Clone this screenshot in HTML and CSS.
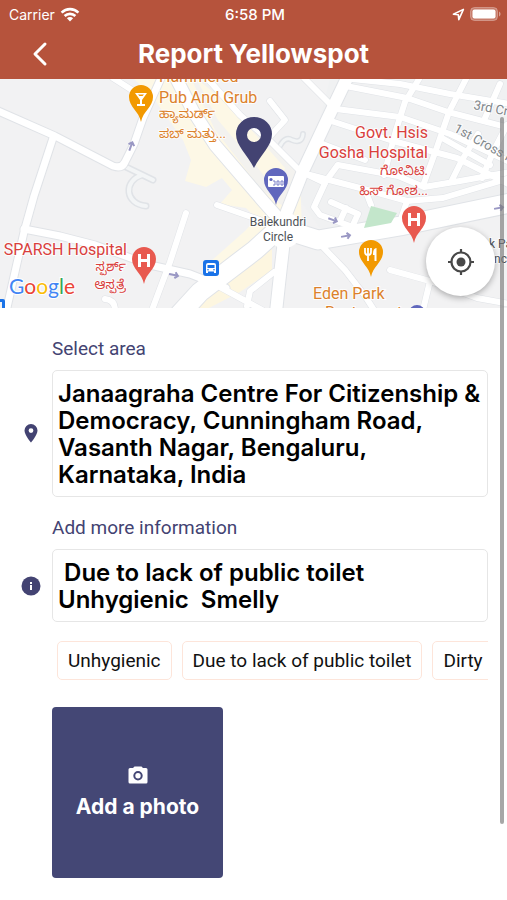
FILE: index.html
```html
<!DOCTYPE html>
<html lang="en">
<head>
    <meta charset="UTF-8">
    <meta name="viewport" content="width=device-width, initial-scale=1.0">
    <title>Report Yellowspot</title>
    <link rel="stylesheet" href="styles.css">
</head>
<body>
    <header class="header">
        <div class="status-bar">
            <div class="status-left">
                <span>Carrier</span>
                <svg width="20" height="15" viewBox="0 0 20 15" fill="none" stroke="#fff" stroke-width="2.6">
                    <path d="M1.6 5.6a12 12 0 0 1 16.8 0"/>
                    <path d="M4.6 9a7.8 7.8 0 0 1 10.8 0"/>
                    <path d="M10 14.4L6.9 11.3a4.4 4.4 0 0 1 6.2 0z" fill="#fff" stroke="none"/>
                </svg>
            </div>
            <span class="status-time">6:58 PM</span>
            <div class="status-right">
                <svg width="13" height="13" viewBox="0 0 13 13" fill="none" stroke="#fff" stroke-width="1.6" stroke-linejoin="round">
                    <path d="M11.4 1.4L1.4 6.2l4.9.5.5 4.9z"/>
                </svg>
                <svg width="31" height="14" viewBox="0 0 31 14">
                    <rect x="0.5" y="0.5" width="27" height="13" rx="4" fill="#fff" fill-opacity="0.25" stroke="#fff" stroke-opacity="0.3"/>
                    <rect x="2.5" y="2.5" width="23" height="9" rx="2" fill="#fff"/>
                    <path d="M29 4.5c2 .8 2 4.2 0 5z" fill="#fff" fill-opacity="0.45"/>
                </svg>
            </div>
        </div>
        <div class="nav-bar">
            <button class="back-btn" type="button" aria-label="Back">
                <svg width="16" height="26" viewBox="0 0 16 26" fill="none" stroke="#fff" stroke-width="3" stroke-linecap="round" stroke-linejoin="round">
                    <path d="M13 3L3 13l10 10"/>
                </svg>
            </button>
            <h1>Report Yellowspot</h1>
        </div>
    </header>

    <main>
        <section class="map">
            <svg class="map-canvas" viewBox="0 79 507 229" preserveAspectRatio="xMidYMid slice">
                <defs>
                    <g id="minor">
                        <path d="M207 78L240 115L270 141L300 171L325 183"/>
                        <path d="M270 101L285 120L273 133L268 139"/>
                        <path d="M217 205L260 220"/>
                        <path d="M186 213L170 262L152 310"/>
                        <path d="M113 78L135 92"/>
                        <path d="M105 299Q115 300 115 310"/>
                        <path d="M322 246L345 270L365 296L374 310"/>
                        <path d="M390 270L430 281L423 310M430 281L477 298L510 304"/>
                        <path d="M220 287L262 310M274 272L250 291L247 306"/>
                        <path d="M304 78L332 106"/>
                        <path d="M352 79L400 84L450 94L510 104"/>
                        <path d="M346 86L407 98L448 112L510 128"/>
                        <path d="M336 109L400 117L450 134L510 162"/>
                        <path d="M328 120L393 141L457 158L510 185"/>
                        <path d="M310 175L360 188L407 201L443 198L510 178"/>
                        <path d="M320 143L365 160M338 165L398 176L424 187L460 181L510 172"/>
                        <path d="M419 79L405 102L396 130L384 175"/>
                        <path d="M466 79L449 112L436 150L424 183"/>
                        <path d="M500 84L485 118M478 134L462 160L452 180"/>
                        <path d="M507 125L493 152L482 178"/>
                        <path d="M442 138L490 165"/>
                        <path d="M337 166L326 181L314 207L320 215L353 227"/>
                        <path d="M331 202L358 214L352 227M346 208L340 221"/>
                        <path d="M366 192L371 205M407 201L402 216"/>
                    </g>
                    <g id="medium">
                        <path d="M-4 110L55 136L113 166Q122 169 125 162L134 144L143 118L162 76"/>
                        <path d="M53 138L34 196L24 232L6 312"/>
                        <path d="M24 229L60 236L95 245L150 265L190 274L226 288"/>
                    </g>
                    <g id="major">
                        <path d="M176 78L193 111L215 145L263 201L286 227"/>
                        <path d="M350 72L326 122L303 171L286 214L284 240L280 275L276 312"/>
                    </g>
                    <g id="arterial">
                        <path d="M286 222L255 250L200 292L178 316"/>
                        <path d="M280 228L318 240L400 226L515 202"/>
                    </g>
                    <path id="pin" d="M0 23C-2 12-12 8-12-2a12 12 0 0 1 24 0C12 8 2 12 0 23z"/>
                    <g id="arrow" fill="none" stroke="#9a98c4" stroke-width="2">
                        <path d="M-5 0H4M1-3l3 3l-3 3"/>
                    </g>
                </defs>

                <rect y="79" width="507" height="229" fill="#f2f2f3"/>
                <path d="M330 79H507V200L400 222L325 235L300 200z" fill="#f0f1f2"/>
                <path d="M133 78H213L242 117L300 173L302 232L278 245L262 240L212 286L210 262L246 230L256 218L246 208L220 204L232 190L222 178L206 187L185 181L191 160L183 140L152 96z" fill="#fdf8e6"/>
                <path d="M272 240V270L240 292L205 310H190L222 284z" fill="#fdf6e0"/>
                <path d="M191 78L207 78L240 115L270 141L298 172L288 210L262 190L215 130z" fill="#f3f2ef"/>
                <path d="M196 78L230 106L285 168L277 192L250 158L218 120z" fill="#fdf8e6"/>

                <g fill="none" stroke-linecap="round" stroke-linejoin="round" stroke="#e0e3e7">
                    <path d="M124 166L153 180M142 175C123 181 125 204 146 206" stroke-width="7"/>
                    <path d="M280 146Q285 136 292 140Q302 144 303 134" stroke-width="6"/>
                    <path d="M124 166L153 180M142 175C123 181 125 204 146 206" stroke="#f3f5f6" stroke-width="4"/>
                    <path d="M280 146Q285 136 292 140Q302 144 303 134" stroke="#f3f5f6" stroke-width="3"/>
                    <use href="#minor" stroke-width="7"/>
                    <use href="#medium" stroke-width="9"/>
                    <use href="#major" stroke-width="14"/>
                    <use href="#arterial" stroke-width="21"/>
                </g>
                <g fill="none" stroke-linecap="round" stroke-linejoin="round" stroke="#fff">
                    <use href="#minor" stroke-width="6"/>
                    <use href="#medium" stroke-width="7"/>
                    <use href="#major" stroke-width="12"/>
                    <use href="#arterial" stroke-width="19"/>
                </g>
                <circle cx="284" cy="230" r="18" fill="#fff"/>
                <path d="M371 206L397 213L391 223L364 228z" fill="#c3e6cb"/>

                <use href="#arrow" transform="translate(131 146) rotate(-70)"/>
                <use href="#arrow" transform="translate(174 275) rotate(12)"/>
                <use href="#arrow" transform="translate(333 220) rotate(20)"/>
                <use href="#arrow" transform="translate(346 236) rotate(-10)"/>
                <use href="#arrow" transform="translate(499 208) rotate(-10)"/>

                <!-- place labels -->
                <g class="label orange">
                    <text x="159" y="82">Hammered</text>
                    <text x="159" y="103">Pub And Grub</text>
                    <text class="kannada" x="159" y="118">ಹ್ಯಾಮರ್ಡ್</text>
                    <text class="kannada" x="159" y="138">ಪಬ್ ಮತ್ತು...</text>
                    <text x="313" y="299">Eden Park</text>
                    <text x="325" y="318">Restaurant</text>
                </g>
                <g class="label red" text-anchor="end">
                    <text x="428" y="138">Govt. Hsis</text>
                    <text x="428" y="158">Gosha Hospital</text>
                    <text class="kannada" x="428" y="175">ಗೋವಿಟಿ.</text>
                    <text class="kannada" x="428" y="195">ಹಿಸ್ ಗೋಶ...</text>
                    <text x="127" y="255">SPARSH Hospital</text>
                    <text class="kannada" x="126" y="271">ಸ್ಪರ್ಶ್</text>
                    <text class="kannada" x="126" y="289">ಆಸ್ಪತ್ರೆ</text>
                </g>
                <g class="label small">
                    <text x="278" y="226" text-anchor="middle">Balekundri</text>
                    <text x="278" y="241" text-anchor="middle">Circle</text>
                    <text x="489" y="248">k Park</text>
                    <text x="494" y="263">nction</text>
                </g>
                <g class="label street">
                    <text transform="translate(473 109) rotate(11)">3rd Cross</text>
                    <text transform="translate(453 131) rotate(29)">1st Cross Road</text>
                </g>

                <!-- place pins -->
                <g transform="translate(141 99)">
                    <use href="#pin" fill="#f29900"/>
                    <path d="M-6-6H6L1 1V5H4V7H-4V5H-1V1zM-3-4.5L-1.5-3h3L3-4.5z" fill="#fff" fill-rule="evenodd"/>
                </g>
                <g transform="translate(144 261)">
                    <use href="#pin" fill="#e8594f"/>
                    <path d="M-4.5-7V6M4.5-7V6M-4.5-.5H4.5" stroke="#fff" stroke-width="3" fill="none"/>
                </g>
                <g transform="translate(414 220)">
                    <use href="#pin" fill="#e8594f"/>
                    <path d="M-4.5-7V6M4.5-7V6M-4.5-.5H4.5" stroke="#fff" stroke-width="3" fill="none"/>
                </g>
                <g transform="translate(371 254)">
                    <use href="#pin" fill="#f29900"/>
                    <path d="M-6-6V-2Q-6 1-3 1T0-2V-6M-3-6V7" stroke="#fff" stroke-width="1.8" fill="none"/>
                    <path d="M2 0Q2-6 5.500-6V7H3.500V1H2z" fill="#fff"/>
                </g>
                <g transform="translate(276 182)">
                    <use href="#pin" fill="#6067bd"/>
                    <rect x="-8" y="-6" width="16" height="11" rx="1" fill="#fff"/>
                    <circle cx="-5" cy="-2.5" r="1.6" fill="#6067bd"/>
                    <path d="M-3-1h2v4h-2M1-1h2v4h-2zM5-1h2v4h-2z" stroke="#7b80c8" fill="none"/>
                </g>
                <g transform="translate(211 268)">
                    <rect x="-8" y="-8" width="16" height="16" rx="3" fill="#1a73e8"/>
                    <path d="M-5 5V-3Q-5-5-3-5H3Q5-5 5-3V5H3V3.500H-3V5z" fill="#fff"/>
                    <path d="M-3.500-3H3.500V0H-3.500z" fill="#1a73e8"/>
                    <circle cx="-3" cy="1.700" r="0.800" fill="#1a73e8"/>
                    <circle cx="3" cy="1.700" r="0.800" fill="#1a73e8"/>
                </g>
                <path d="M-2 299H3Q5 299 5 301V309H2V302H-2z" fill="#1a73e8"/>
                <circle cx="417" cy="313" r="8" fill="#6067bd"/>
                <path d="M254 168C247 154 236 146 236 134a18 17 0 0 1 36 0C272 146 261 154 254 168zM254 128a7 7 0 1 0 0 14a7 7 0 0 0 0-14z" fill="#434372" fill-rule="evenodd"/>

                <text class="google" x="9" y="294"><tspan fill="#4285f4">G</tspan><tspan fill="#ea4335">o</tspan><tspan fill="#fbbc05">o</tspan><tspan fill="#4285f4">g</tspan><tspan fill="#34a853">l</tspan><tspan fill="#ea4335">e</tspan></text>
            </svg>
            <button class="locate-btn" type="button" aria-label="My location">
                <svg width="28" height="28" viewBox="0 0 28 28" fill="none" stroke="#484848" stroke-width="2.200">
                    <circle cx="14" cy="14" r="9.500"/>
                    <circle cx="14" cy="14" r="4.500" fill="#484848" stroke="none"/>
                    <path d="M14 1v4M14 23v4M1 14h4M23 14h4"/>
                </svg>
            </button>
        </section>

        <form class="report-form">
            <div class="field">
                <label for="area">Select area</label>
                <svg class="field-icon" width="14" height="20" viewBox="0 0 14 20">
                    <path d="M7 0a6.500 6.500 0 0 0-6.500 6.500C.5 11 7 18.500 7 18.500S13.500 11 13.500 6.500A6.500 6.500 0 0 0 7 0zM7 4.200a2.400 2.400 0 1 1 0 4.800a2.400 2.400 0 0 1 0-4.800z" fill="#434372" fill-rule="evenodd"/>
                </svg>
                <textarea id="area" rows="4">Janaagraha Centre For Citizenship &amp; Democracy, Cunningham Road, Vasanth Nagar, Bengaluru, Karnataka, India</textarea>
            </div>
            <div class="field">
                <label for="info">Add more information</label>
                <svg class="field-icon" width="20" height="20" viewBox="0 0 20 20">
                    <circle cx="10" cy="10" r="9.500" fill="#434372"/>
                    <path d="M9 9h2v5H9zM9 6h2v2H9z" fill="#fff"/>
                </svg>
                <textarea id="info" rows="2"> Due to lack of public toilet
Unhygienic  Smelly</textarea>
            </div>
            <div class="chips">
                <button class="chip" type="button">Unhygienic</button>
                <button class="chip" type="button">Due to lack of public toilet</button>
                <button class="chip" type="button">Dirty</button>
            </div>
            <button class="photo-btn" type="button">
                <svg width="20" height="18" viewBox="0 0 20 18">
                    <path d="M6.500 0.500L5 2H2Q.5 2 .5 3.500V16Q.5 17.500 2 17.500H18Q19.500 17.500 19.500 16V3.500Q19.500 2 18 2H15L13.500.5zM10 5a4.700 4.700 0 1 1 0 9.400A4.700 4.700 0 0 1 10 5zM10 7a2.700 2.700 0 1 0 0 5.400A2.700 2.700 0 0 0 10 7z" fill="#fff" fill-rule="evenodd"/>
                </svg>
                <span>Add a photo</span>
            </button>
        </form>
    </main>
    <div class="scroll-thumb"></div>
</body>
</html>
```

FILE: styles.css
```css
:root {
    --brand: #b6533c;
    --ink: #434372;
    --photo: #444775;
    --border: #e6e6e6;
    --chip-border: #fde5da;
    --heading-font: Inter, "Open Sans", sans-serif;
    --body-font: Roboto, "Liberation Sans", sans-serif;
}
* {
    box-sizing: border-box;
}
body {
    position: relative;
    margin: 0;
    min-height: 100vh;
    background: #fff;
    font-family: var(--body-font);
    overflow-x: hidden;
}
button {
    border: none;
    padding: 0;
    cursor: pointer;
}
svg {
    display: block;
}

/* Header */
.header {
    background: var(--brand);
    color: #fff;
}
.status-bar {
    display: grid;
    grid-template-columns: 1fr auto 1fr;
    align-items: center;
    height: 28px;
    padding: 0 6px 0 9px;
    font-family: Inter, sans-serif;
    font-size: 14px;
}
.status-left, .status-right {
    display: flex;
    align-items: center;
    gap: 5px;
}
.status-right {
    justify-content: flex-end;
}
.status-time {
    font-size: 15px;
    font-weight: 500;
}
.nav-bar {
    display: grid;
    grid-template-columns: 48px 1fr 48px;
    align-items: center;
    height: 51px;
    padding: 0 16px;
}
.back-btn {
    display: flex;
    justify-content: center;
    background: none;
}
h1 {
    margin: 0;
    font-family: var(--heading-font);
    font-size: 26px;
    font-weight: 700;
    line-height: 32px;
    text-align: center;
}

/* Map */
.map {
    position: relative;
}
.map-canvas {
    width: 100%;
    height: 229px;
}
.label {
    font-family: Roboto, "Noto Sans Kannada", sans-serif;
    font-size: 16px;
    stroke: #fff;
    stroke-width: 2px;
    stroke-opacity: 0.8;
    paint-order: stroke;
}
.kannada {
    font-size: 13px;
}
.orange {
    fill: #dc812b;
}
.red {
    fill: #d93f3c;
}
.small {
    font-size: 12px;
    fill: #4d5156;
}
.street {
    font-size: 13px;
    fill: #80868b;
}
.google {
    font-family: Lato, sans-serif;
    font-size: 21px;
    stroke: #fff;
    stroke-width: 2px;
    paint-order: stroke;
}
.locate-btn {
    position: absolute;
    right: 12px;
    bottom: 12px;
    display: flex;
    align-items: center;
    justify-content: center;
    width: 69px;
    height: 69px;
    border-radius: 50%;
    background: #fff;
    box-shadow: 0 2px 6px rgba(0, 0, 0, 0.3);
}

/* Form */
.report-form {
    display: flex;
    flex-direction: column;
    gap: 19px;
    padding: 29px 19px 22px 10px;
}
.field {
    display: grid;
    grid-template-columns: 42px 1fr;
    row-gap: 9px;
    align-items: center;
}
label {
    grid-column: 2;
    color: var(--ink);
    font-size: 19px;
    line-height: 24px;
}
.field-icon {
    justify-self: center;
}
textarea {
    display: block;
    width: 100%;
    margin: 0;
    padding: 9px 0 8px 5px;
    border: 1px solid var(--border);
    border-radius: 5px;
    outline: none;
    resize: none;
    overflow: hidden;
    background: #fff;
    color: #000;
    font-family: var(--heading-font);
    font-size: 24px;
    font-weight: 600;
    line-height: 27px;
}
.chips {
    display: flex;
    gap: 10px;
    margin-left: 42px;
    padding-left: 5px;
    overflow: hidden;
}
.chip {
    flex: none;
    padding: 7px 10px;
    border: 1px solid var(--chip-border);
    border-radius: 5px;
    background: #fff;
    color: #111;
    font-family: var(--body-font);
    font-size: 19px;
    line-height: 23px;
}
.photo-btn {
    display: flex;
    flex-direction: column;
    align-items: center;
    justify-content: center;
    gap: 10px;
    width: 171px;
    height: 171px;
    margin: 8px 0 0 42px;
    border-radius: 4px;
    background: var(--photo);
    color: #fff;
    font-family: var(--heading-font);
    font-size: 21px;
    font-weight: 700;
    line-height: 26px;
}

.scroll-thumb {
    position: absolute;
    top: 117px;
    right: 3px;
    bottom: 76px;
    width: 4px;
    border-radius: 2px;
    background: rgba(120, 120, 120, 0.65);
}
```
